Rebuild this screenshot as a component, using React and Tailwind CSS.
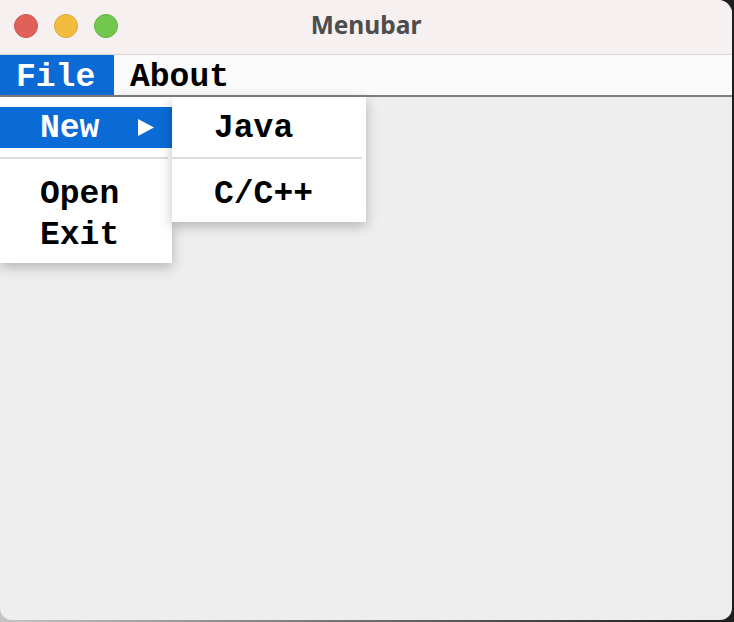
import React from 'react'

const mono = { fontFamily: '"Liberation Mono", "Courier New", monospace' }

function MenuRow({ label, active, arrow, indent = 'pl-[40px]' }) {
    return (
        <div className={`h-[41px] flex items-center ${indent} pr-[18px] ${active ? 'bg-[#0a6bd6] text-white' : 'text-black'}`}>
            <span className="flex-1 text-[33px] font-bold leading-none pt-[2px]">{label}</span>
            {arrow && (
                <svg width="16" height="17" viewBox="0 0 16 17" className="ml-2">
                    <polygon points="0,0 16,8.5 0,17" fill="#ffffff" />
                </svg>
            )}
        </div>
    )
}

function Separator() {
    return <div className="h-[2px] bg-[#dcdcdc] my-[9px] mr-[4px]" />
}

export default function App() {
    return (
        <div className="w-[734px] h-[622px] bg-[linear-gradient(to_right,#c4c4c4,#1e1e1e_95%)] overflow-hidden">
            <div className="w-[732px] h-[620px] bg-[#eeeeee] rounded-tr-[14px] rounded-b-[12px] overflow-hidden flex flex-col relative">
                {/* title bar */}
                <div className="h-[55px] bg-[#f6f0f0] border-b border-[#d6d6d6] flex items-center relative shrink-0">
                    <div className="flex gap-[16px] pl-[14px] -mt-[2px]">
                        <span className="w-[24px] h-[24px] rounded-full bg-[#e0605a] border border-[#cf5650]" />
                        <span className="w-[24px] h-[24px] rounded-full bg-[#f2bd3f] border border-[#dca936]" />
                        <span className="w-[24px] h-[24px] rounded-full bg-[#72c84c] border border-[#62b340]" />
                    </div>
                    <div className="absolute inset-0 flex items-center justify-center pointer-events-none">
                        <span className="text-[24.5px] font-bold text-[#4d4d4d] -mt-[4px]" style={{ fontFamily: '"Noto Sans", "Open Sans", sans-serif' }}>Menubar</span>
                    </div>
                </div>

                {/* menubar */}
                <div className="h-[42px] bg-[#fafafa] border-b-2 border-[#808080] flex shrink-0" style={mono}>
                    <div className="w-[114px] bg-[#0a6bd6] text-white flex items-center pl-[16px] pt-[4px] text-[33px] font-bold leading-none">File</div>
                    <div className="flex items-center pl-[16px] pt-[4px] text-[33px] font-bold leading-none text-black">About</div>
                </div>

                {/* content */}
                <div className="flex-1 relative" style={mono}>
                    <div className="absolute left-0 top-0 w-[172px] bg-white pt-[10px] pb-[8px] shadow-[0_4px_12px_rgba(0,0,0,0.25)]">
                        <MenuRow label="New" active arrow />
                        <Separator />
                        <div className="pt-[5px]">
                            <MenuRow label="Open" />
                            <MenuRow label="Exit" />
                        </div>
                    </div>
                    <div className="absolute left-[172px] top-0 w-[194px] bg-white pt-[10px] pb-[8px] shadow-[0_4px_12px_rgba(0,0,0,0.25)]">
                        <MenuRow label="Java" indent="pl-[42px]" />
                        <Separator />
                        <div className="pt-[5px]">
                            <MenuRow label="C/C++" indent="pl-[42px]" />
                        </div>
                    </div>
                </div>
            </div>
        </div>
    )
}
